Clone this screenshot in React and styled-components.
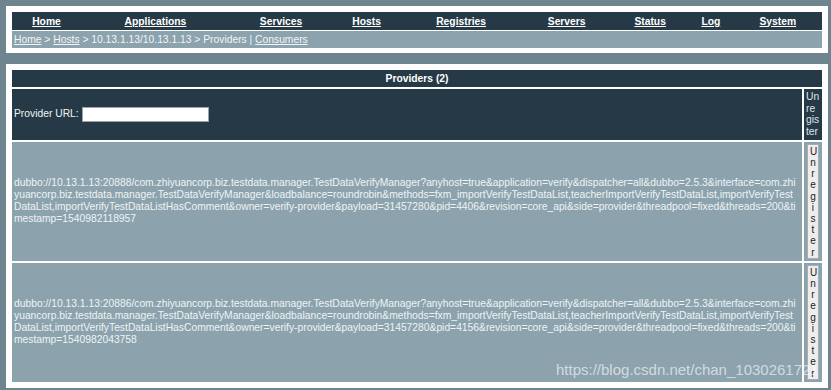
import React from "react";
import styled, { createGlobalStyle } from "styled-components";

const GlobalStyle = createGlobalStyle`
  html, body {
    margin: 0;
    padding: 0;
    background: #6e8590;
  }
  body {
    font-family: "Liberation Sans", Arial, sans-serif;
    font-size: 10.3px;
  }
`;

const Page = styled.div`
  position: relative;
  width: 831px;
  height: 390px;
  overflow: hidden;
  padding: 6px 3px 0 6px;
  box-sizing: border-box;
  display: flex;
  flex-direction: column;
  gap: 11px;
`;

const Panel = styled.div`
  background: #fff;
  padding: ${({ $pad }) => $pad};
`;

const NavTable = styled.table`
  width: 100%;
  border-collapse: collapse;
  background: #253a46;
  height: 18px;
`;

const NavCell = styled.td`
  text-align: center;
  padding: 0;
  a {
    color: #fff;
    font-weight: bold;
    font-size: 10.3px;
    text-decoration: underline;
  }
`;

const Crumbs = styled.div`
  margin-top: 1px;
  background: #8ca3ad;
  height: 17px;
  line-height: 17px;
  padding-left: 2px;
  color: #f2f5f6;
  font-size: 10.3px;
  a {
    color: #f2f5f6;
    text-decoration: underline;
  }
`;

const ListTable = styled.table`
  width: 100%;
  border-collapse: separate;
  border-spacing: 2px;
  table-layout: fixed;
`;

const HeadCell = styled.th`
  background: #253a46;
  color: #fff;
  font-weight: bold;
  font-size: 10.3px;
  height: 17px;
  padding: 0;
  text-align: center;
`;

const FilterCell = styled.td`
  background: #253a46;
  color: #f2f5f6;
  padding: 2px;
  font-size: 10.3px;
  vertical-align: middle;
`;

const UrlInput = styled.input`
  width: 127px;
  height: 15px;
  box-sizing: border-box;
  margin: 0 0 0 3px;
  border: 1px solid #9aa5aa;
  background: #fff;
  vertical-align: middle;
`;

const NarrowHead = styled.td`
  background: #253a46;
  color: #dde5e8;
  font-size: 10.3px;
  line-height: 11.7px;
  padding: 2px;
  word-break: break-all;
  vertical-align: top;
`;

const UrlCell = styled.td`
  background: #8ca3ad;
  color: #eef3f5;
  font-size: 10.3px;
  line-height: 12px;
  padding: 2px;
  word-break: break-all;
  vertical-align: middle;
`;

const ActionCell = styled.td`
  background: #8ca3ad;
  padding: 2px 2px 2px 3px;
  vertical-align: top;
`;

const UnregisterButton = styled.button`
  display: block;
  width: 12px;
  min-width: 0;
  box-sizing: border-box;
  padding: 1px 2px 0;
  border: 1px solid #a7aeb1;
  background: #ededed;
  color: #222;
  font-family: "Liberation Sans", Arial, sans-serif;
  font-size: 10px;
  line-height: 11.2px;
  word-break: break-all;
  overflow-wrap: anywhere;
  white-space: normal;
  text-align: center;
`;

const Watermark = styled.div`
  position: absolute;
  left: 556px;
  top: 361px;
  font-family: "Liberation Sans", Arial, sans-serif;
  font-size: 15px;
  color: rgba(255, 255, 255, 0.62);
  white-space: nowrap;
  pointer-events: none;
`;

const navItems = [
  "Home",
  "Applications",
  "Services",
  "Hosts",
  "Registries",
  "Servers",
  "Status",
  "Log",
  "System",
];

const providers = [
  "dubbo://10.13.1.13:20888/com.zhiyuancorp.biz.testdata.manager.TestDataVerifyManager?anyhost=true&application=verify&dispatcher=all&dubbo=2.5.3&interface=com.zhiyuancorp.biz.testdata.manager.TestDataVerifyManager&loadbalance=roundrobin&methods=fxm_importVerifyTestDataList,teacherImportVerifyTestDataList,importVerifyTestDataList,importVerifyTestDataListHasComment&owner=verify-provider&payload=31457280&pid=4406&revision=core_api&side=provider&threadpool=fixed&threads=200&timestamp=1540982118957",
  "dubbo://10.13.1.13:20886/com.zhiyuancorp.biz.testdata.manager.TestDataVerifyManager?anyhost=true&application=verify&dispatcher=all&dubbo=2.5.3&interface=com.zhiyuancorp.biz.testdata.manager.TestDataVerifyManager&loadbalance=roundrobin&methods=fxm_importVerifyTestDataList,teacherImportVerifyTestDataList,importVerifyTestDataList,importVerifyTestDataListHasComment&owner=verify-provider&payload=31457280&pid=4156&revision=core_api&side=provider&threadpool=fixed&threads=200&timestamp=1540982043758",
];

export default function App() {
  return (
    <>
      <GlobalStyle />
      <Page>
        <Panel $pad="6px 6px 5px 6px">
          <NavTable>
            <tbody>
              <tr>
                {navItems.map((item) => (
                  <NavCell key={item}>
                    <a href="#">{item}</a>
                  </NavCell>
                ))}
              </tr>
            </tbody>
          </NavTable>
          <Crumbs>
            <a href="#">Home</a> &gt; <a href="#">Hosts</a> &gt; 10.13.1.13/10.13.1.13 &gt; Providers | <a href="#">Consumers</a>
          </Crumbs>
        </Panel>

        <Panel $pad="4px">
          <ListTable>
            <colgroup>
              <col />
              <col style={{ width: 18 }} />
            </colgroup>
            <thead>
              <tr>
                <HeadCell colSpan={2}>Providers (2)</HeadCell>
              </tr>
            </thead>
            <tbody>
              <tr>
                <FilterCell>
                  Provider URL:<UrlInput type="text" />
                </FilterCell>
                <NarrowHead>Unregister</NarrowHead>
              </tr>
              {providers.map((url) => (
                <tr key={url}>
                  <UrlCell>{url}</UrlCell>
                  <ActionCell>
                    <UnregisterButton>Unregister</UnregisterButton>
                  </ActionCell>
                </tr>
              ))}
            </tbody>
          </ListTable>
        </Panel>

        <Watermark>https://blog.csdn.net/chan_1030261721</Watermark>
      </Page>
    </>
  );
}
